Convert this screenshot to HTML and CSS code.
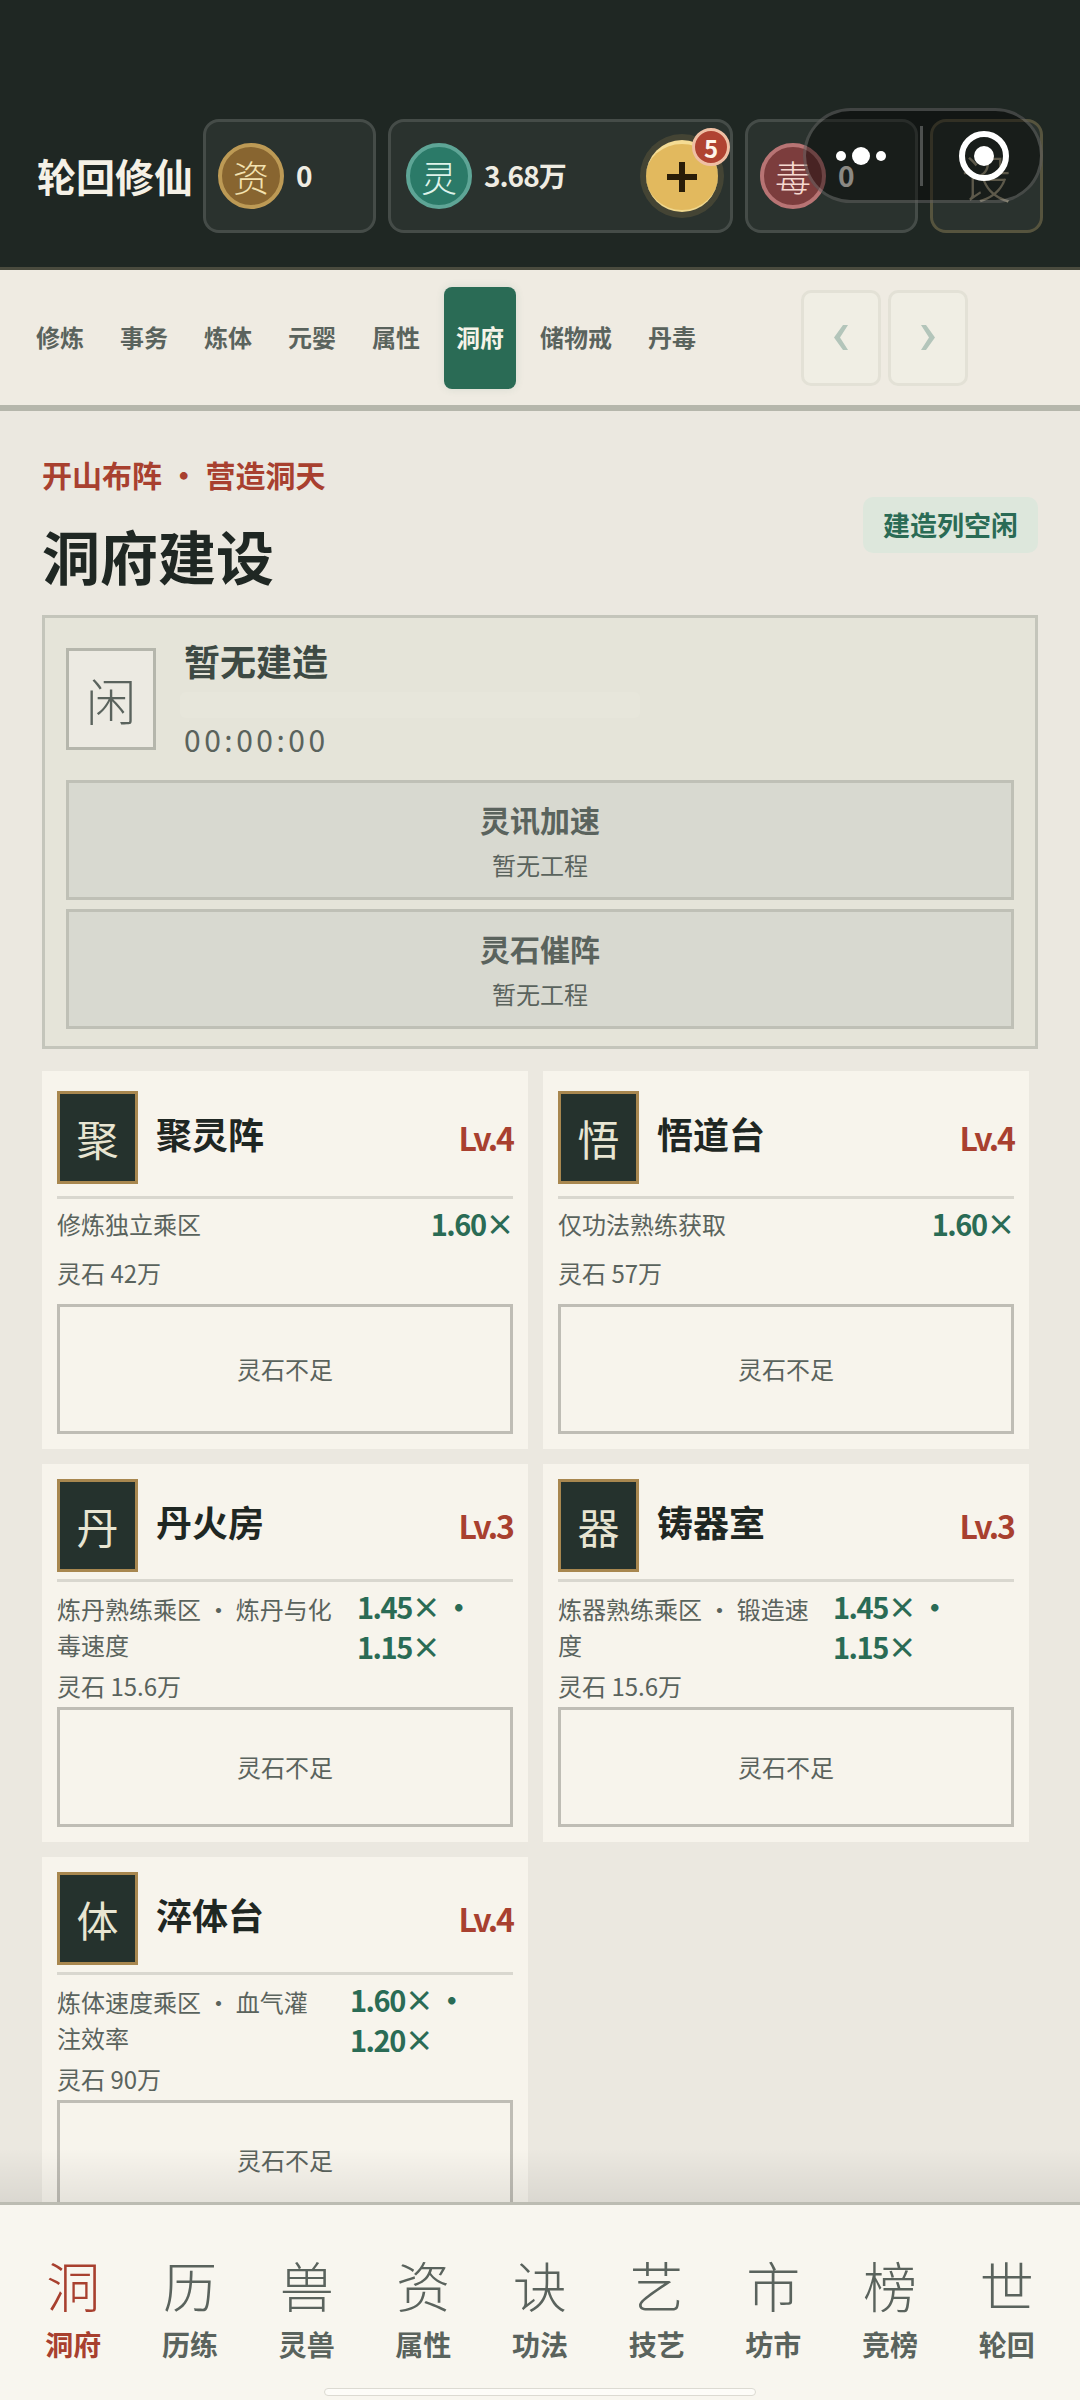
FILE: index.html
```html
<!DOCTYPE html>
<html lang="zh-CN">
<head>
    <meta charset="utf-8">
    <title>轮回修仙</title>
    <link rel="stylesheet" href="styles.css">
</head>
<body>
<div class="app">

    <header class="topbar">
        <div class="brand">轮回修仙</div>
        <div class="chip chip-small">
            <span class="coin coin-gold">资</span>
            <span class="chip-value">0</span>
        </div>
        <div class="chip chip-wide">
            <span class="coin coin-green">灵</span>
            <span class="chip-value">3.68万</span>
            <span class="plus">
                <svg width="30" height="30" viewBox="0 0 30 30"><path d="M12 0 H18 V12 H30 V18 H18 V30 H12 V18 H0 V12 H12 Z"/></svg>
                <span class="badge">5</span>
            </span>
        </div>
        <div class="chip chip-small">
            <span class="coin coin-red">毒</span>
            <span class="chip-value">0</span>
        </div>
        <div class="chip chip-set">设</div>
    </header>

    <!-- mini program capsule floats over the header -->
    <div class="capsule">
        <svg width="240" height="95" viewBox="0 0 240 95">
            <circle cx="38" cy="48" r="5" fill="#fff"/>
            <circle cx="58" cy="48" r="9" fill="#fff"/>
            <circle cx="78" cy="48" r="5" fill="#fff"/>
            <rect x="117" y="18" width="3" height="60" fill="#ffffff" opacity="0.25"/>
            <circle cx="181" cy="48" r="22" fill="none" stroke="#fff" stroke-width="6"/>
            <circle cx="181" cy="48" r="10" fill="#fff"/>
        </svg>
    </div>

    <nav class="tabs">
        <span class="tab">修炼</span>
        <span class="tab">事务</span>
        <span class="tab">炼体</span>
        <span class="tab">元婴</span>
        <span class="tab">属性</span>
        <span class="tab tab-on">洞府</span>
        <span class="tab">储物戒</span>
        <span class="tab">丹毒</span>
        <div class="arrows">
            <span class="arrow"><svg width="14" height="25" viewBox="0 0 14 25"><path d="M14 0 L6 12.5 L14 25 L9 25 L0 12.5 L9 0 Z"/></svg></span>
            <span class="arrow"><svg width="14" height="25" viewBox="0 0 14 25"><path d="M0 0 L8 12.5 L0 25 L5 25 L14 12.5 L5 0 Z"/></svg></span>
        </div>
    </nav>

    <main class="main">
        <div class="head">
            <div class="head-text">
                <div class="eyebrow">开山布阵 · 营造洞天</div>
                <h1 class="title">洞府建设</h1>
            </div>
            <div class="status">建造列空闲</div>
        </div>

        <section class="panel">
            <div class="queue">
                <div class="queue-icon">闲</div>
                <div class="queue-text">
                    <div class="queue-name">暂无建造</div>
                    <div class="queue-bar"></div>
                    <div class="queue-time">00:00:00</div>
                </div>
            </div>
            <div class="speed">
                <div class="speed-name">灵讯加速</div>
                <div class="speed-sub">暂无工程</div>
            </div>
            <div class="speed">
                <div class="speed-name">灵石催阵</div>
                <div class="speed-sub">暂无工程</div>
            </div>
        </section>

        <section class="grid">
            <article class="card">
                <div class="card-head">
                    <div class="card-icon">聚</div>
                    <div class="card-name">聚灵阵</div>
                    <div class="card-level">Lv.4</div>
                </div>
                <div class="stat-wrap"><div class="stat">
                    <div class="stat-label">修炼独立乘区</div>
                    <div class="stat-value">1.60×</div>
                </div></div>
                <div class="cost">灵石 42万</div>
                <div class="card-btn">灵石不足</div>
            </article>

            <article class="card">
                <div class="card-head">
                    <div class="card-icon">悟</div>
                    <div class="card-name">悟道台</div>
                    <div class="card-level">Lv.4</div>
                </div>
                <div class="stat-wrap"><div class="stat">
                    <div class="stat-label">仅功法熟练获取</div>
                    <div class="stat-value">1.60×</div>
                </div></div>
                <div class="cost">灵石 57万</div>
                <div class="card-btn">灵石不足</div>
            </article>

            <article class="card">
                <div class="card-head">
                    <div class="card-icon">丹</div>
                    <div class="card-name">丹火房</div>
                    <div class="card-level">Lv.3</div>
                </div>
                <div class="stat-wrap"><div class="stat stat-long">
                    <div class="stat-label">炼丹熟练乘区 · 炼丹与化毒速度</div>
                    <div class="stat-value">1.45× · 1.15×</div>
                </div></div>
                <div class="cost">灵石 15.6万</div>
                <div class="card-btn">灵石不足</div>
            </article>

            <article class="card">
                <div class="card-head">
                    <div class="card-icon">器</div>
                    <div class="card-name">铸器室</div>
                    <div class="card-level">Lv.3</div>
                </div>
                <div class="stat-wrap"><div class="stat stat-short">
                    <div class="stat-label">炼器熟练乘区 · 锻造速度</div>
                    <div class="stat-value">1.45× · 1.15×</div>
                </div></div>
                <div class="cost">灵石 15.6万</div>
                <div class="card-btn">灵石不足</div>
            </article>

            <article class="card">
                <div class="card-head">
                    <div class="card-icon">体</div>
                    <div class="card-name">淬体台</div>
                    <div class="card-level">Lv.4</div>
                </div>
                <div class="stat-wrap"><div class="stat stat-mid">
                    <div class="stat-label">炼体速度乘区 · 血气灌注效率</div>
                    <div class="stat-value">1.60× · 1.20×</div>
                </div></div>
                <div class="cost">灵石 90万</div>
                <div class="card-btn">灵石不足</div>
            </article>
        </section>
    </main>

    <footer class="dock">
        <div class="dock-row">
            <div class="dock-item dock-on"><span class="dock-glyph">洞</span><span class="dock-label">洞府</span></div>
            <div class="dock-item"><span class="dock-glyph">历</span><span class="dock-label">历练</span></div>
            <div class="dock-item"><span class="dock-glyph">兽</span><span class="dock-label">灵兽</span></div>
            <div class="dock-item"><span class="dock-glyph">资</span><span class="dock-label">属性</span></div>
            <div class="dock-item"><span class="dock-glyph">诀</span><span class="dock-label">功法</span></div>
            <div class="dock-item"><span class="dock-glyph">艺</span><span class="dock-label">技艺</span></div>
            <div class="dock-item"><span class="dock-glyph">市</span><span class="dock-label">坊市</span></div>
            <div class="dock-item"><span class="dock-glyph">榜</span><span class="dock-label">竞榜</span></div>
            <div class="dock-item"><span class="dock-glyph">世</span><span class="dock-label">轮回</span></div>
        </div>
        <div class="home-bar"></div>
    </footer>

</div>
</body>
</html>
```

FILE: styles.css
```css
* {
    box-sizing: border-box;
}

html, body {
    margin: 0;
    height: 100%;
}

body {
    font-family: "Noto Sans CJK SC", sans-serif;
    color: #5a635d;
    background-color: #ebe8e0;
}

.app {
    position: relative;
    display: flex;
    flex-direction: column;
    width: 1080px;
    height: 2400px;
    overflow: hidden;
}

/* top bar */
.topbar {
    display: flex;
    flex: none;
    align-items: flex-start;
    gap: 12px;
    height: 270px;
    padding: 119px 0 0 37px;
    background-color: #1f2723;
    border-bottom: 3px solid #4a4b3e;
}

.brand {
    width: 154px;
    height: 114px;
    color: #f5f1e6;
    font-size: 39px;
    font-weight: 700;
    line-height: 112px;
    white-space: nowrap;
}

.chip {
    display: flex;
    align-items: center;
    height: 114px;
    padding-left: 12px;
    border: 3px solid rgba(255, 255, 255, 0.13);
    border-radius: 16px;
    background-color: rgba(255, 255, 255, 0.05);
}

.chip-small {
    width: 173px;
}

.chip-wide {
    width: 345px;
    padding-left: 15px;
}

.chip-set {
    justify-content: center;
    width: 113px;
    padding-left: 0;
    border-color: rgba(170, 150, 95, 0.35);
    color: #a09a80;
    font-size: 50px;
    font-weight: 300;
}

.chip-value {
    margin: 0 0 2px 12px;
    color: #efece2;
    font-size: 28px;
    font-weight: 700;
    letter-spacing: -1px;
}

.coin {
    display: flex;
    flex: none;
    align-items: center;
    justify-content: center;
    width: 66px;
    height: 66px;
    border: 4px solid;
    border-radius: 50%;
    font-size: 36px;
    font-weight: 300;
}

.coin-gold {
    color: #f3e2b0;
    background-color: #886530;
    border-color: #bd9a55;
}

.coin-green {
    color: #dff3ea;
    background-color: #2b7a68;
    border-color: #5ea596;
}

.coin-red {
    color: #f6d9d0;
    background-color: #7c3d3d;
    border-color: #b87474;
}

.plus {
    position: relative;
    display: flex;
    align-items: center;
    justify-content: center;
    width: 72px;
    height: 72px;
    margin-left: auto;
    margin-right: 12px;
    border-top: 4px solid #f5dc94;
    border-bottom: 2px solid #f0d88e;
    border-radius: 50%;
    background-color: #e2b95e;
    box-shadow: 0 0 0 6px rgba(226, 185, 94, 0.14);
}

.plus path {
    fill: #2a1d08;
}

.badge {
    position: absolute;
    top: -16px;
    left: 46px;
    display: flex;
    align-items: center;
    justify-content: center;
    width: 38px;
    height: 38px;
    border: 3px solid #efbfa4;
    border-radius: 50%;
    color: #fff5ea;
    background-color: #b04332;
    font-size: 24px;
    font-weight: 700;
}

.capsule {
    position: absolute;
    top: 108px;
    left: 803px;
    width: 240px;
    height: 95px;
    border-radius: 48px;
    background-color: rgba(0, 0, 0, 0.42);
    box-shadow: inset 0 0 0 3px rgba(255, 255, 255, 0.2);
}

.capsule svg {
    display: block;
}

/* sub tabs */
.tabs {
    display: flex;
    flex: none;
    align-items: center;
    gap: 12px;
    height: 141px;
    padding: 0 112px 0 24px;
    background-color: #efebe2;
    border-bottom: 6px solid #b5b6ab;
}

.tab {
    display: flex;
    align-items: center;
    height: 102px;
    padding: 0 12px 2px;
    border-radius: 8px;
    font-size: 24px;
    font-weight: 700;
    white-space: nowrap;
}

.tab-on {
    color: #f5f3e8;
    background-color: #2a6b55;
    box-shadow: 0 0 8px rgba(42, 107, 85, 0.12);
}

.arrows {
    display: flex;
    gap: 7px;
    margin-left: auto;
}

.arrow {
    display: flex;
    align-items: center;
    justify-content: center;
    width: 80px;
    height: 96px;
    border: 3px solid #e3e1d6;
    border-radius: 10px;
    background-color: #f0eee4;
}

.arrow path {
    fill: #b3c5ba;
}

/* main */
.main {
    flex: 1;
    min-height: 0;
    overflow: hidden;
    padding: 45px 42px 0;
}

.head {
    display: flex;
    align-items: center;
    justify-content: space-between;
    width: 996px;
    height: 138px;
    margin-bottom: 21px;
}

.head-text {
    padding-bottom: 6px;
}

.eyebrow {
    color: #a8402f;
    font-size: 30px;
    font-weight: 700;
    line-height: 40px;
}

.title {
    margin: 25px 0 0;
    color: #1f2723;
    font-size: 58px;
    font-weight: 700;
    line-height: 72px;
}

.status {
    padding: 0 20px;
    border-radius: 10px;
    color: #2a6b55;
    background-color: #dde7dc;
    font-size: 27px;
    font-weight: 700;
    line-height: 56px;
}

.panel {
    display: flex;
    flex-direction: column;
    gap: 9px;
    width: 996px;
    height: 434px;
    padding: 21px 21px 17px;
    border: 3px solid #c4c5bb;
    background-color: #e5e4d9;
}

.queue {
    display: flex;
    flex: none;
    align-items: center;
    gap: 28px;
    margin-bottom: 11px;
}

.queue-icon {
    display: flex;
    flex: none;
    align-items: center;
    justify-content: center;
    width: 90px;
    height: 102px;
    margin-top: -2px;
    border: 3px solid #b5b6ac;
    background-color: #eceae2;
    font-size: 50px;
    font-weight: 300;
}

.queue-text {
    flex: 1;
}

.queue-name {
    margin-top: -3px;
    color: #3e4a44;
    font-size: 36px;
    font-weight: 700;
    line-height: 48px;
}

.queue-bar {
    width: 460px;
    height: 26px;
    margin: 8px 0 0 -4px;
    border-radius: 6px;
    background-color: #e7e6db;
}

.queue-time {
    font-size: 30px;
    letter-spacing: 3.5px;
    line-height: 42px;
}

.speed {
    display: flex;
    flex: none;
    flex-direction: column;
    align-items: center;
    justify-content: center;
    height: 120px;
    padding-top: 1px;
    border: 3px solid #bfc0b6;
    background-color: #d8d9d0;
}

.speed-name {
    margin-bottom: 3px;
    font-size: 30px;
    font-weight: 700;
    line-height: 46px;
}

.speed-sub {
    font-size: 24px;
    line-height: 40px;
}

/* building cards */
.grid {
    display: grid;
    grid-template-columns: 486px 486px;
    grid-auto-rows: 378px;
    gap: 15px;
    margin-top: 22px;
}

.card {
    display: flex;
    flex-direction: column;
    padding: 15px;
    background-color: #f7f4ec;
}

.card-head {
    display: flex;
    flex: 1 1 auto;
    align-items: center;
    padding-bottom: 6px;
    border-bottom: 3px solid #d9d7cf;
}

.card-icon {
    display: flex;
    flex: none;
    align-items: center;
    justify-content: center;
    width: 81px;
    height: 93px;
    border: 3px solid #a8874f;
    color: #e8e5d2;
    background-color: #25322d;
    font-size: 42px;
}

.card-name {
    margin: 0 0 10px 18px;
    color: #1f2723;
    font-size: 36px;
    font-weight: 700;
}

.card-level {
    margin: 0 0 2px auto;
    color: #a8402f;
    font-size: 32px;
    font-weight: 700;
    letter-spacing: -2px;
}

.stat-wrap {
    flex: 1 1 auto;
    padding: 6px 0 3px;
}

.stat {
    display: flex;
    align-items: center;
    justify-content: space-between;
    gap: 24px;
}

.stat-label {
    font-size: 24px;
    line-height: 36px;
}

.stat-value {
    margin-top: -2px;
    color: #2a6b55;
    font-size: 29px;
    font-weight: 700;
    letter-spacing: -1.5px;
    line-height: 40px;
}

/* the two-effect buildings share the row unevenly */
.stat-long .stat-value {
    flex: none;
    width: 156px;
}

.stat-mid .stat-value {
    flex: none;
    width: 163px;
}

.stat-short .stat-value {
    flex: none;
    width: 181px;
}

.stat-long .stat-label,
.stat-mid .stat-label,
.stat-short .stat-label {
    flex: 1;
}

.cost {
    flex: 1 1 auto;
    padding-bottom: 3px;
    font-size: 24px;
    line-height: 34px;
}

.card-btn {
    display: flex;
    flex: 1 1 120px;
    align-items: center;
    justify-content: center;
    border: 3px solid #bfbdb5;
    font-size: 24px;
}

/* bottom dock */
.dock {
    position: relative;
    flex: none;
    height: 198px;
    padding: 46px 15px 0;
    background-color: #f8f6ef;
    border-top: 3px solid #bcbcb2;
}

.dock::before {
    content: "";
    position: absolute;
    top: -57px;
    left: 0;
    right: 0;
    height: 54px;
    background: linear-gradient(rgba(0, 0, 0, 0), rgba(0, 0, 0, 0.07));
}

.dock-row {
    display: grid;
    grid-template-columns: repeat(9, 1fr);
}

.dock-item {
    display: flex;
    flex-direction: column;
    align-items: center;
}

.dock-glyph {
    margin-top: -1px;
    font-size: 54px;
    font-weight: 300;
    line-height: 70px;
}

.dock-label {
    margin-top: 4px;
    font-size: 28px;
    font-weight: 700;
    line-height: 40px;
}

.dock-on {
    color: #a8402f;
}

.home-bar {
    width: 432px;
    height: 8px;
    margin: 24px auto 0;
    border: 1px solid #dcdad2;
    border-radius: 4px;
    background-color: #fdfcf8;
}
```
